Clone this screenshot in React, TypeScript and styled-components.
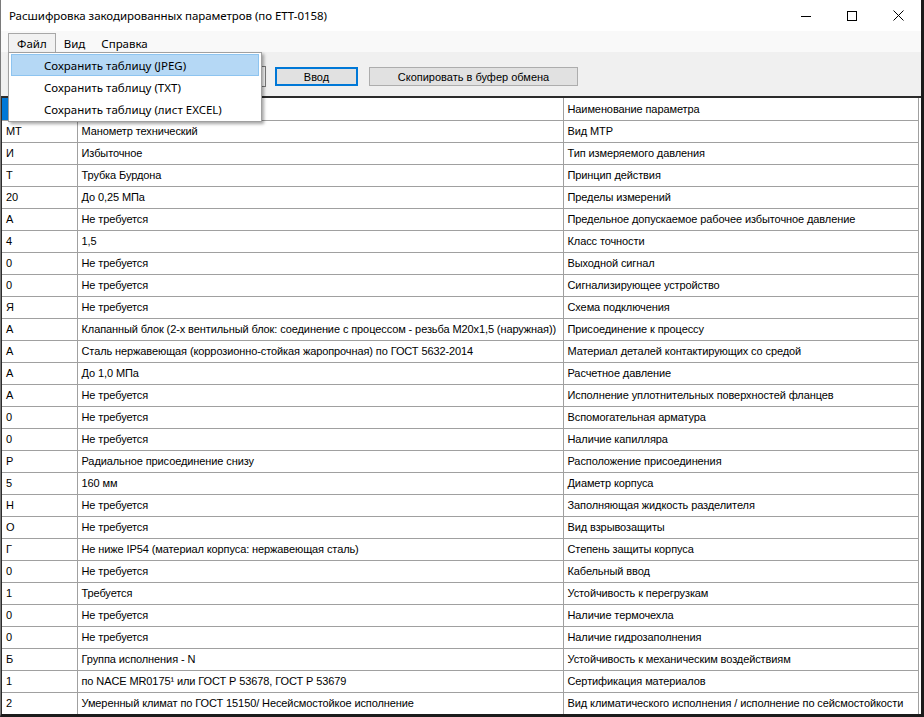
import React from "react";
import styled, { createGlobalStyle } from "styled-components";

const GlobalStyle = createGlobalStyle`
  html, body {
    margin: 0;
    padding: 0;
    background: #ffffff;
  }
  * {
    box-sizing: border-box;
  }
`;

const uiFont = `"Noto Sans", "Open Sans", sans-serif`;
const gridFont = `"Liberation Sans", Arial, sans-serif`;

const Window = styled.div`
  position: relative;
  width: 924px;
  height: 717px;
  display: flex;
  flex-direction: column;
  background: #f0f0f0;
  border-left: 1px solid #7a7a7a;
  border-right: 3px solid #1b1b1b;
  border-bottom: 3px solid #1b1b1b;
  overflow: hidden;
`;

const TitleBar = styled.div`
  height: 31px;
  flex: none;
  display: flex;
  align-items: center;
  background: #ffffff;
`;

const Title = styled.div`
  flex: 1;
  padding-left: 8px;
  font-family: ${uiFont};
  font-size: 11.5px;
  letter-spacing: -0.05px;
  color: #000;
  white-space: nowrap;
`;

const Controls = styled.div`
  display: flex;
  height: 100%;
`;

const ControlButton = styled.div`
  width: 46px;
  height: 100%;
  display: flex;
  align-items: center;
  justify-content: center;
`;

const MenuBar = styled.div`
  height: 21px;
  flex: none;
  display: flex;
  align-items: stretch;
  padding: 2px 0 0 7px;
  background: #f9f9f9;
  font-family: ${uiFont};
  font-size: 11.5px;
`;

const MenuItem = styled.div<{ $open?: boolean }>`
  display: flex;
  align-items: center;
  padding: 0 ${(p) => (p.$open ? "8px" : "7px")};
  border: 1px solid ${(p) => (p.$open ? "#a8a8a8" : "transparent")};
  border-bottom: none;
  background: ${(p) => (p.$open ? "#f2f2f2" : "transparent")};
  color: #000;
`;

const ToolBar = styled.div`
  height: 44px;
  flex: none;
  display: flex;
  align-items: center;
  gap: 9px;
  padding: 5px 0 0 7px;
  background: #f0f0f0;
  font-family: ${gridFont};
  font-size: 11px;
`;

const TextBox = styled.div`
  width: 258px;
  height: 21px;
  background: #ffffff;
  border: 1px solid #7a7a7a;
`;

const Button = styled.div<{ $width: number; $default?: boolean }>`
  width: ${(p) => p.$width}px;
  height: 19px;
  display: flex;
  align-items: center;
  justify-content: center;
  background: #e1e1e1;
  border: 1px solid ${(p) => (p.$default ? "#0078d7" : "#adadad")};
  box-shadow: ${(p) => (p.$default ? "inset 0 0 0 1px #0078d7" : "none")};
  color: #000;
  margin-right: ${(p) => (p.$default ? "2px" : "0")};
`;

const GridArea = styled.div`
  flex: 1;
  background: #ffffff;
  border-top: 2px solid #2b2b2b;
  border-left: 1px solid #2b2b2b;
  overflow: hidden;
`;

const Table = styled.table`
  border-collapse: collapse;
  table-layout: fixed;
  font-family: ${gridFont};
  font-size: 11px;
  color: #000;
`;

const Cell = styled.td<{ $width?: number; $selected?: boolean }>`
  width: ${(p) => (p.$width ? `${p.$width}px` : "auto")};
  height: 22px;
  padding: 0 0 0 4px;
  border-right: 1px solid #a0a0a0;
  border-bottom: 1px solid #a0a0a0;
  white-space: nowrap;
  overflow: hidden;
  letter-spacing: -0.1px;
  background: ${(p) => (p.$selected ? "#0078d7" : "#ffffff")};
  color: ${(p) => (p.$selected ? "#ffffff" : "#000000")};
`;

const Dropdown = styled.div`
  position: absolute;
  left: 7px;
  top: 52px;
  width: 254px;
  padding: 1px 2px;
  background: #ffffff;
  border: 1px solid #a0a0a0;
  box-shadow: 2px 2px 3px rgba(0, 0, 0, 0.35);
  font-family: ${uiFont};
  font-size: 11.5px;
`;

const DropItem = styled.div<{ $active?: boolean }>`
  height: 22px;
  display: flex;
  align-items: center;
  padding-left: 32px;
  background: ${(p) => (p.$active ? "#b5d8f5" : "transparent")};
  border: 1px solid ${(p) => (p.$active ? "#8dc4f0" : "transparent")};
  color: #000;
  white-space: nowrap;
`;

const rows: [string, string, string][] = [
  ["МТ", "Манометр технический", "Вид МТР"],
  ["И", "Избыточное", "Тип измеряемого давления"],
  ["Т", "Трубка Бурдона", "Принцип действия"],
  ["20", "До 0,25 МПа", "Пределы измерений"],
  ["А", "Не требуется", "Предельное допускаемое рабочее избыточное давление"],
  ["4", "1,5", "Класс точности"],
  ["0", "Не требуется", "Выходной сигнал"],
  ["0", "Не требуется", "Сигнализирующее устройство"],
  ["Я", "Не требуется", "Схема подключения"],
  [
    "А",
    "Клапанный блок (2-х вентильный блок: соединение с процессом - резьба М20х1,5 (наружная))",
    "Присоединение к процессу",
  ],
  [
    "А",
    "Сталь нержавеющая (коррозионно-стойкая жаропрочная) по ГОСТ 5632-2014",
    "Материал деталей контактирующих со средой",
  ],
  ["А", "До 1,0 МПа", "Расчетное давление"],
  ["А", "Не требуется", "Исполнение уплотнительных поверхностей фланцев"],
  ["0", "Не требуется", "Вспомогательная арматура"],
  ["0", "Не требуется", "Наличие капилляра"],
  ["Р", "Радиальное присоединение снизу", "Расположение присоединения"],
  ["5", "160 мм", "Диаметр корпуса"],
  ["Н", "Не требуется", "Заполняющая жидкость разделителя"],
  ["О", "Не требуется", "Вид взрывозащиты"],
  ["Г", "Не ниже IP54 (материал корпуса: нержавеющая сталь)", "Степень защиты корпуса"],
  ["0", "Не требуется", "Кабельный ввод"],
  ["1", "Требуется", "Устойчивость к перегрузкам"],
  ["0", "Не требуется", "Наличие термочехла"],
  ["0", "Не требуется", "Наличие гидрозаполнения"],
  ["Б", "Группа исполнения - N", "Устойчивость к механическим воздействиям"],
  ["1", "по NACE MR0175¹ или ГОСТ Р 53678, ГОСТ Р 53679", "Сертификация материалов"],
  [
    "2",
    "Умеренный климат по ГОСТ 15150/ Несейсмостойкое исполнение",
    "Вид климатического исполнения / исполнение по сейсмостойкости",
  ],
];

export default function App() {
  return (
    <>
      <GlobalStyle />
      <Window>
        <TitleBar>
          <Title>Расшифровка закодированных параметров (по ЕТТ-0158)</Title>
          <Controls>
            <ControlButton>
              <svg width="10" height="10" viewBox="0 0 10 10">
                <path d="M0 5.5h10" stroke="#000" strokeWidth="1" />
              </svg>
            </ControlButton>
            <ControlButton>
              <svg width="10" height="10" viewBox="0 0 10 10">
                <rect x="0.5" y="0.5" width="9" height="9" fill="none" stroke="#000" strokeWidth="1" />
              </svg>
            </ControlButton>
            <ControlButton>
              <svg width="11" height="11" viewBox="0 0 11 11">
                <path d="M0.5 0.5l10 10M10.5 0.5l-10 10" stroke="#000" strokeWidth="1" />
              </svg>
            </ControlButton>
          </Controls>
        </TitleBar>
        <MenuBar>
          <MenuItem $open>Файл</MenuItem>
          <MenuItem>Вид</MenuItem>
          <MenuItem>Справка</MenuItem>
        </MenuBar>
        <ToolBar>
          <TextBox />
          <Button $width={83} $default>
            Ввод
          </Button>
          <Button $width={209}>Скопировать в буфер обмена</Button>
        </ToolBar>
        <GridArea>
          <Table>
            <tbody>
              <tr>
                <Cell $width={75} $selected />
                <Cell $width={486} />
                <Cell $width={355}>Наименование параметра</Cell>
              </tr>
              {rows.map((r, i) => (
                <tr key={i}>
                  <Cell>{r[0]}</Cell>
                  <Cell>{r[1]}</Cell>
                  <Cell>{r[2]}</Cell>
                </tr>
              ))}
            </tbody>
          </Table>
        </GridArea>
        <Dropdown>
          <DropItem $active>Сохранить таблицу (JPEG)</DropItem>
          <DropItem>Сохранить таблицу (TXT)</DropItem>
          <DropItem>Сохранить таблицу (лист EXCEL)</DropItem>
        </Dropdown>
      </Window>
    </>
  );
}
